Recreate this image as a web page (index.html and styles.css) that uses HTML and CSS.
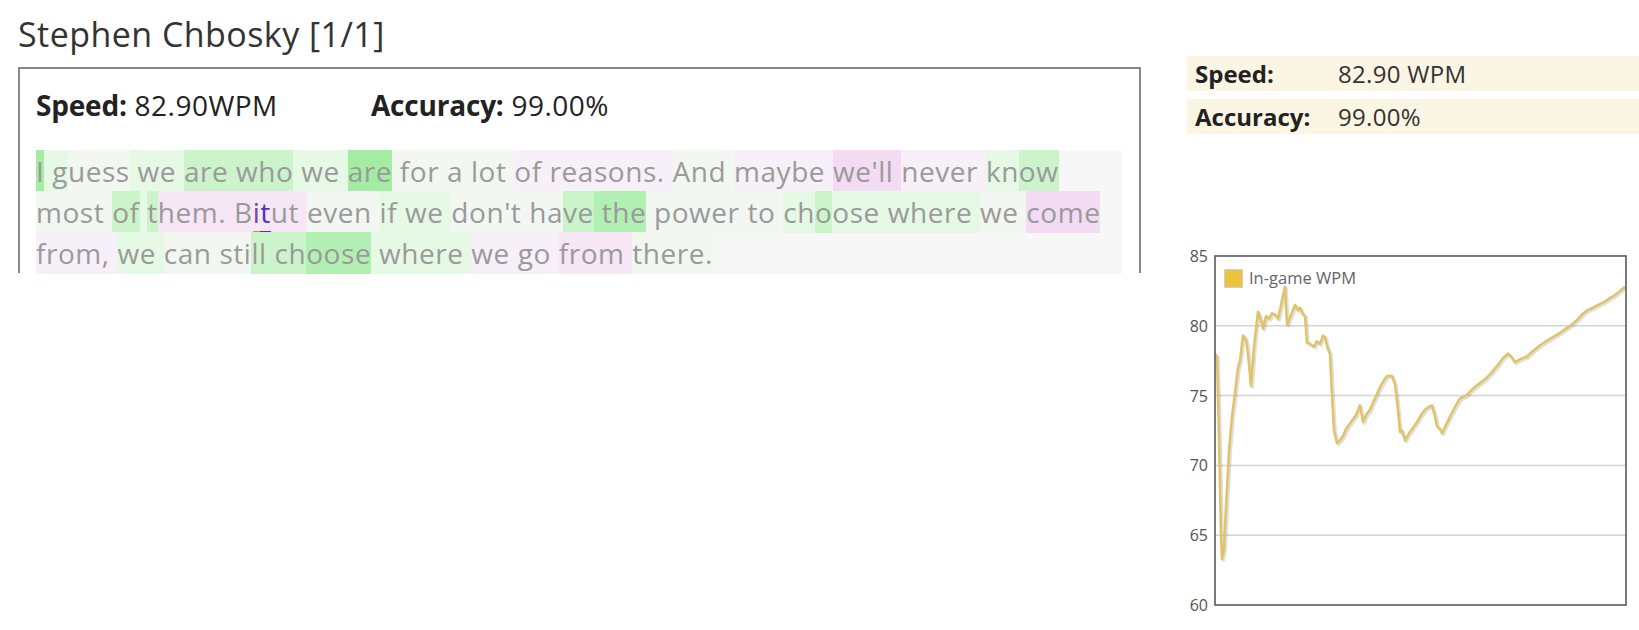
FILE: index.html
```html
<!DOCTYPE html>
<html lang="en">
<head>
<meta charset="utf-8">
<title>Stephen Chbosky [1/1]</title>
<link rel="stylesheet" href="styles.css">
</head>
<body>
<div class="page">
  <div class="main">
    <h1 class="title">Stephen Chbosky [1/1]</h1>
    <div class="result">
      <div class="result-stats"><span class="stat stat-speed"><b>Speed:</b> 82.90WPM</span><span class="stat"><b>Accuracy:</b> 99.00%</span></div>
      <div class="passage"><span class="g4">I</span><span class="g1"> g</span><span class="g0">uess</span><span class="g1"> we </span><span class="g2">are who</span><span class="g1"> we </span><span class="g4">are</span><span class="g0"> for a lot </span><span class="p0">of reasons. </span><span class="g0">And </span><span class="p0">maybe </span><span class="p2">we'll </span><span class="p0">never </span><span class="g1">kn</span><span class="g2">ow</span> <span class="g0">most </span><span class="g2">of</span><span class="g1"> </span><span class="g2">t</span><span class="p1">hem. B</span><span class="p1"><span class="typo-a">i</span><span class="typo-b">t</span>ut </span><span class="g0">even </span><span class="g1">if we </span><span class="g0">don't ha</span><span class="g2">ve</span><span class="g3"> the</span><span class="g0"> power </span><span class="g0">to </span><span class="g1">ch</span><span class="g2">o</span><span class="g1">ose </span><span class="g1">where </span><span class="g0">we </span><span class="p2">come</span> <span class="p0">from, </span><span class="g1">we </span><span class="g0">can sti</span><span class="g2">ll ch</span><span class="g3">oose</span><span class="g1"> where </span><span class="p0">we go </span><span class="p1">from </span><span class="g0">there.</span></div>
    </div>
  </div>
  <aside class="side">
    <div class="side-stats">
      <div class="srow"><span class="lbl">Speed:</span><span class="val">82.90 WPM</span></div>
      <div class="srow"><span class="lbl">Accuracy:</span><span class="val">99.00%</span></div>
    </div>
    <svg class="chart" width="469" height="380" viewBox="0 0 469 380">
      <g class="grid">
        <line x1="46" y1="85.8" x2="456" y2="85.8"/>
        <line x1="46" y1="155.6" x2="456" y2="155.6"/>
        <line x1="46" y1="225.4" x2="456" y2="225.4"/>
        <line x1="46" y1="295.2" x2="456" y2="295.2"/>
      </g>
      <g class="ylabels">
        <text x="38" y="21.5">85</text>
        <text x="38" y="91.5">80</text>
        <text x="38" y="161.5">75</text>
        <text x="38" y="231">70</text>
        <text x="38" y="301">65</text>
        <text x="38" y="370.5">60</text>
      </g>
      <path class="shadow" d="M45,113.7 L47,116.5 L49,197.5 L51,295.2 L52,318.9 L54,309.2 L56,267.3 L59,211.4 L62,176.5 L65,152.8 L68,127.7 L70,120.7 L73,95.6 L76,99.8 L78,113.7 L81,145.8 L84,106.7 L88,71.8 L91,80.2 L93,88.6 L96,76 L99,78.8 L102,73.2 L105,74.6 L108,78.8 L111,64.9 L115,46.7 L117,84.4 L120,77.4 L125,64.9 L128,70.4 L130,67.7 L133,74.6 L135,76 L137,102.6 L140,103.9 L144,106.7 L147,101.2 L150,103.9 L153,95.6 L155,97 L158,109.5 L160,113.7 L162,155.6 L164,190.5 L167,203.1 L170,200.3 L173,196.1 L176,189.1 L180,183.5 L183,179.3 L186,175.1 L190,165.4 L193,182.1 L196,175.1 L200,169.6 L205,158.4 L210,147.2 L214,140.2 L217,136.1 L222,136.1 L225,144.4 L228,169.6 L230,191.9 L232,190.5 L235,200.3 L239,193.3 L243,187.7 L247,182.1 L251,175.1 L255,169.6 L259,166.8 L262,165.4 L265,176.5 L267,186.3 L270,189.1 L272,193.3 L276,184.9 L280,176.5 L285,166.8 L290,158.4 L296,155.6 L303,148.6 L310,143 L317,137.5 L322,131.9 L328,124.9 L333,117.9 L338,113.7 L341,116.5 L345,122.1 L350,119.3 L357,116.5 L363,110.9 L370,105.3 L376,101.2 L383,97 L390,92.8 L396,88.6 L400,85.8 L407,80.2 L412,74.6 L417,70.4 L423,67.7 L428,64.9 L434,62.1 L440,57.9 L445,55.1 L450,50.9 L455,46.7"/>
      <path class="line" d="M45,113.7 L47,116.5 L49,197.5 L51,295.2 L52,318.9 L54,309.2 L56,267.3 L59,211.4 L62,176.5 L65,152.8 L68,127.7 L70,120.7 L73,95.6 L76,99.8 L78,113.7 L81,145.8 L84,106.7 L88,71.8 L91,80.2 L93,88.6 L96,76 L99,78.8 L102,73.2 L105,74.6 L108,78.8 L111,64.9 L115,46.7 L117,84.4 L120,77.4 L125,64.9 L128,70.4 L130,67.7 L133,74.6 L135,76 L137,102.6 L140,103.9 L144,106.7 L147,101.2 L150,103.9 L153,95.6 L155,97 L158,109.5 L160,113.7 L162,155.6 L164,190.5 L167,203.1 L170,200.3 L173,196.1 L176,189.1 L180,183.5 L183,179.3 L186,175.1 L190,165.4 L193,182.1 L196,175.1 L200,169.6 L205,158.4 L210,147.2 L214,140.2 L217,136.1 L222,136.1 L225,144.4 L228,169.6 L230,191.9 L232,190.5 L235,200.3 L239,193.3 L243,187.7 L247,182.1 L251,175.1 L255,169.6 L259,166.8 L262,165.4 L265,176.5 L267,186.3 L270,189.1 L272,193.3 L276,184.9 L280,176.5 L285,166.8 L290,158.4 L296,155.6 L303,148.6 L310,143 L317,137.5 L322,131.9 L328,124.9 L333,117.9 L338,113.7 L341,116.5 L345,122.1 L350,119.3 L357,116.5 L363,110.9 L370,105.3 L376,101.2 L383,97 L390,92.8 L396,88.6 L400,85.8 L407,80.2 L412,74.6 L417,70.4 L423,67.7 L428,64.9 L434,62.1 L440,57.9 L445,55.1 L450,50.9 L455,46.7"/>
      <rect class="frame" x="45" y="16" width="411" height="349"/>
      <rect class="legend-box" x="54.5" y="29.5" width="18" height="18"/>
      <text class="legend-text" x="79" y="44">In-game WPM</text>
    </svg>
  </aside>
</div>
</body>
</html>
```

FILE: styles.css
```css
* { box-sizing: border-box; }

body {
  margin: 0;
  font-family: "Open Sans", "Noto Sans", sans-serif;
  color: #333;
  background: #fff;
}

.page {
  display: flex;
  align-items: flex-start;
}

.main {
  width: 1141px;
  padding-left: 18px;
}

.title {
  margin: 12px 0 10px 0;
  font-size: 34px;
  font-weight: 400;
  letter-spacing: 0.45px;
  line-height: 45px;
  color: #333;
}

.result {
  height: 206px;
  border: 2px solid #888;
  border-bottom: none;
  padding: 18px 17px 0 16px;
}

.result-stats {
  font-size: 28px;
  line-height: 36px;
  color: #222;
  letter-spacing: 0.5px;
  margin-bottom: 28px;
  white-space: nowrap;
}

.stat { display: inline-block; }
.stat-speed { width: 335px; }
.stat b { font-weight: 700; letter-spacing: -0.2px; }

.passage {
  background: #f7f7f7;
  font-size: 28px;
  letter-spacing: 0.55px;
  line-height: 41px;
  color: #9a9a9a;
}

.passage span { padding: 2px 0; }
.passage span span { padding: 0; }

.g0 { background: #f2f7f2; }
.g1 { background: #e5f9e5; }
.g2 { background: #cbf4cb; }
.g3 { background: #b2efb2; }
.g4 { background: #a4eca4; }
.p0 { background: #f8f0f8; }
.p1 { background: #f6e6f6; }
.p2 { background: #f3dcf3; }

.typo-a {
  color: #6f4a9a;
  border-bottom: 3px solid #d88a30;
}
.typo-b {
  color: #4f2fd0;
  border-bottom: 3px solid #4f2fd0;
}

.side {
  margin-left: 29px;
  width: 469px;
}

.side-stats {
  margin: 56px 0 0 17px;
  display: flex;
  flex-direction: column;
  gap: 8px;
}

.srow {
  display: flex;
  align-items: center;
  height: 35px;
  padding-left: 8px;
  background: #fbf6e3;
  font-size: 24px;
  color: #333;
}

.srow .lbl {
  width: 143px;
  font-weight: 700;
  color: #222;
}

.srow .val {
  letter-spacing: 0.3px;
}

.chart {
  display: block;
  margin-top: 106px;
}

.grid line {
  stroke: #d4d4d4;
  stroke-width: 1.5;
}

.ylabels text {
  font-family: "Open Sans", sans-serif;
  font-size: 16px;
  fill: #555;
  text-anchor: end;
}

.frame {
  fill: none;
  stroke: #5a5a5a;
  stroke-width: 1.6;
}

.line {
  fill: none;
  stroke: #e0c46a;
  stroke-width: 2.6;
  stroke-linejoin: round;
}

.shadow {
  fill: none;
  stroke: rgba(0, 0, 0, 0.12);
  stroke-width: 3;
  stroke-linejoin: round;
  transform: translate(1.5px, 1.5px);
}

.legend-box {
  fill: #ecc33e;
  stroke: #cfcfcf;
  stroke-width: 1;
}

.legend-text {
  font-family: "Open Sans", sans-serif;
  font-size: 16.5px;
  fill: #666;
}
```
